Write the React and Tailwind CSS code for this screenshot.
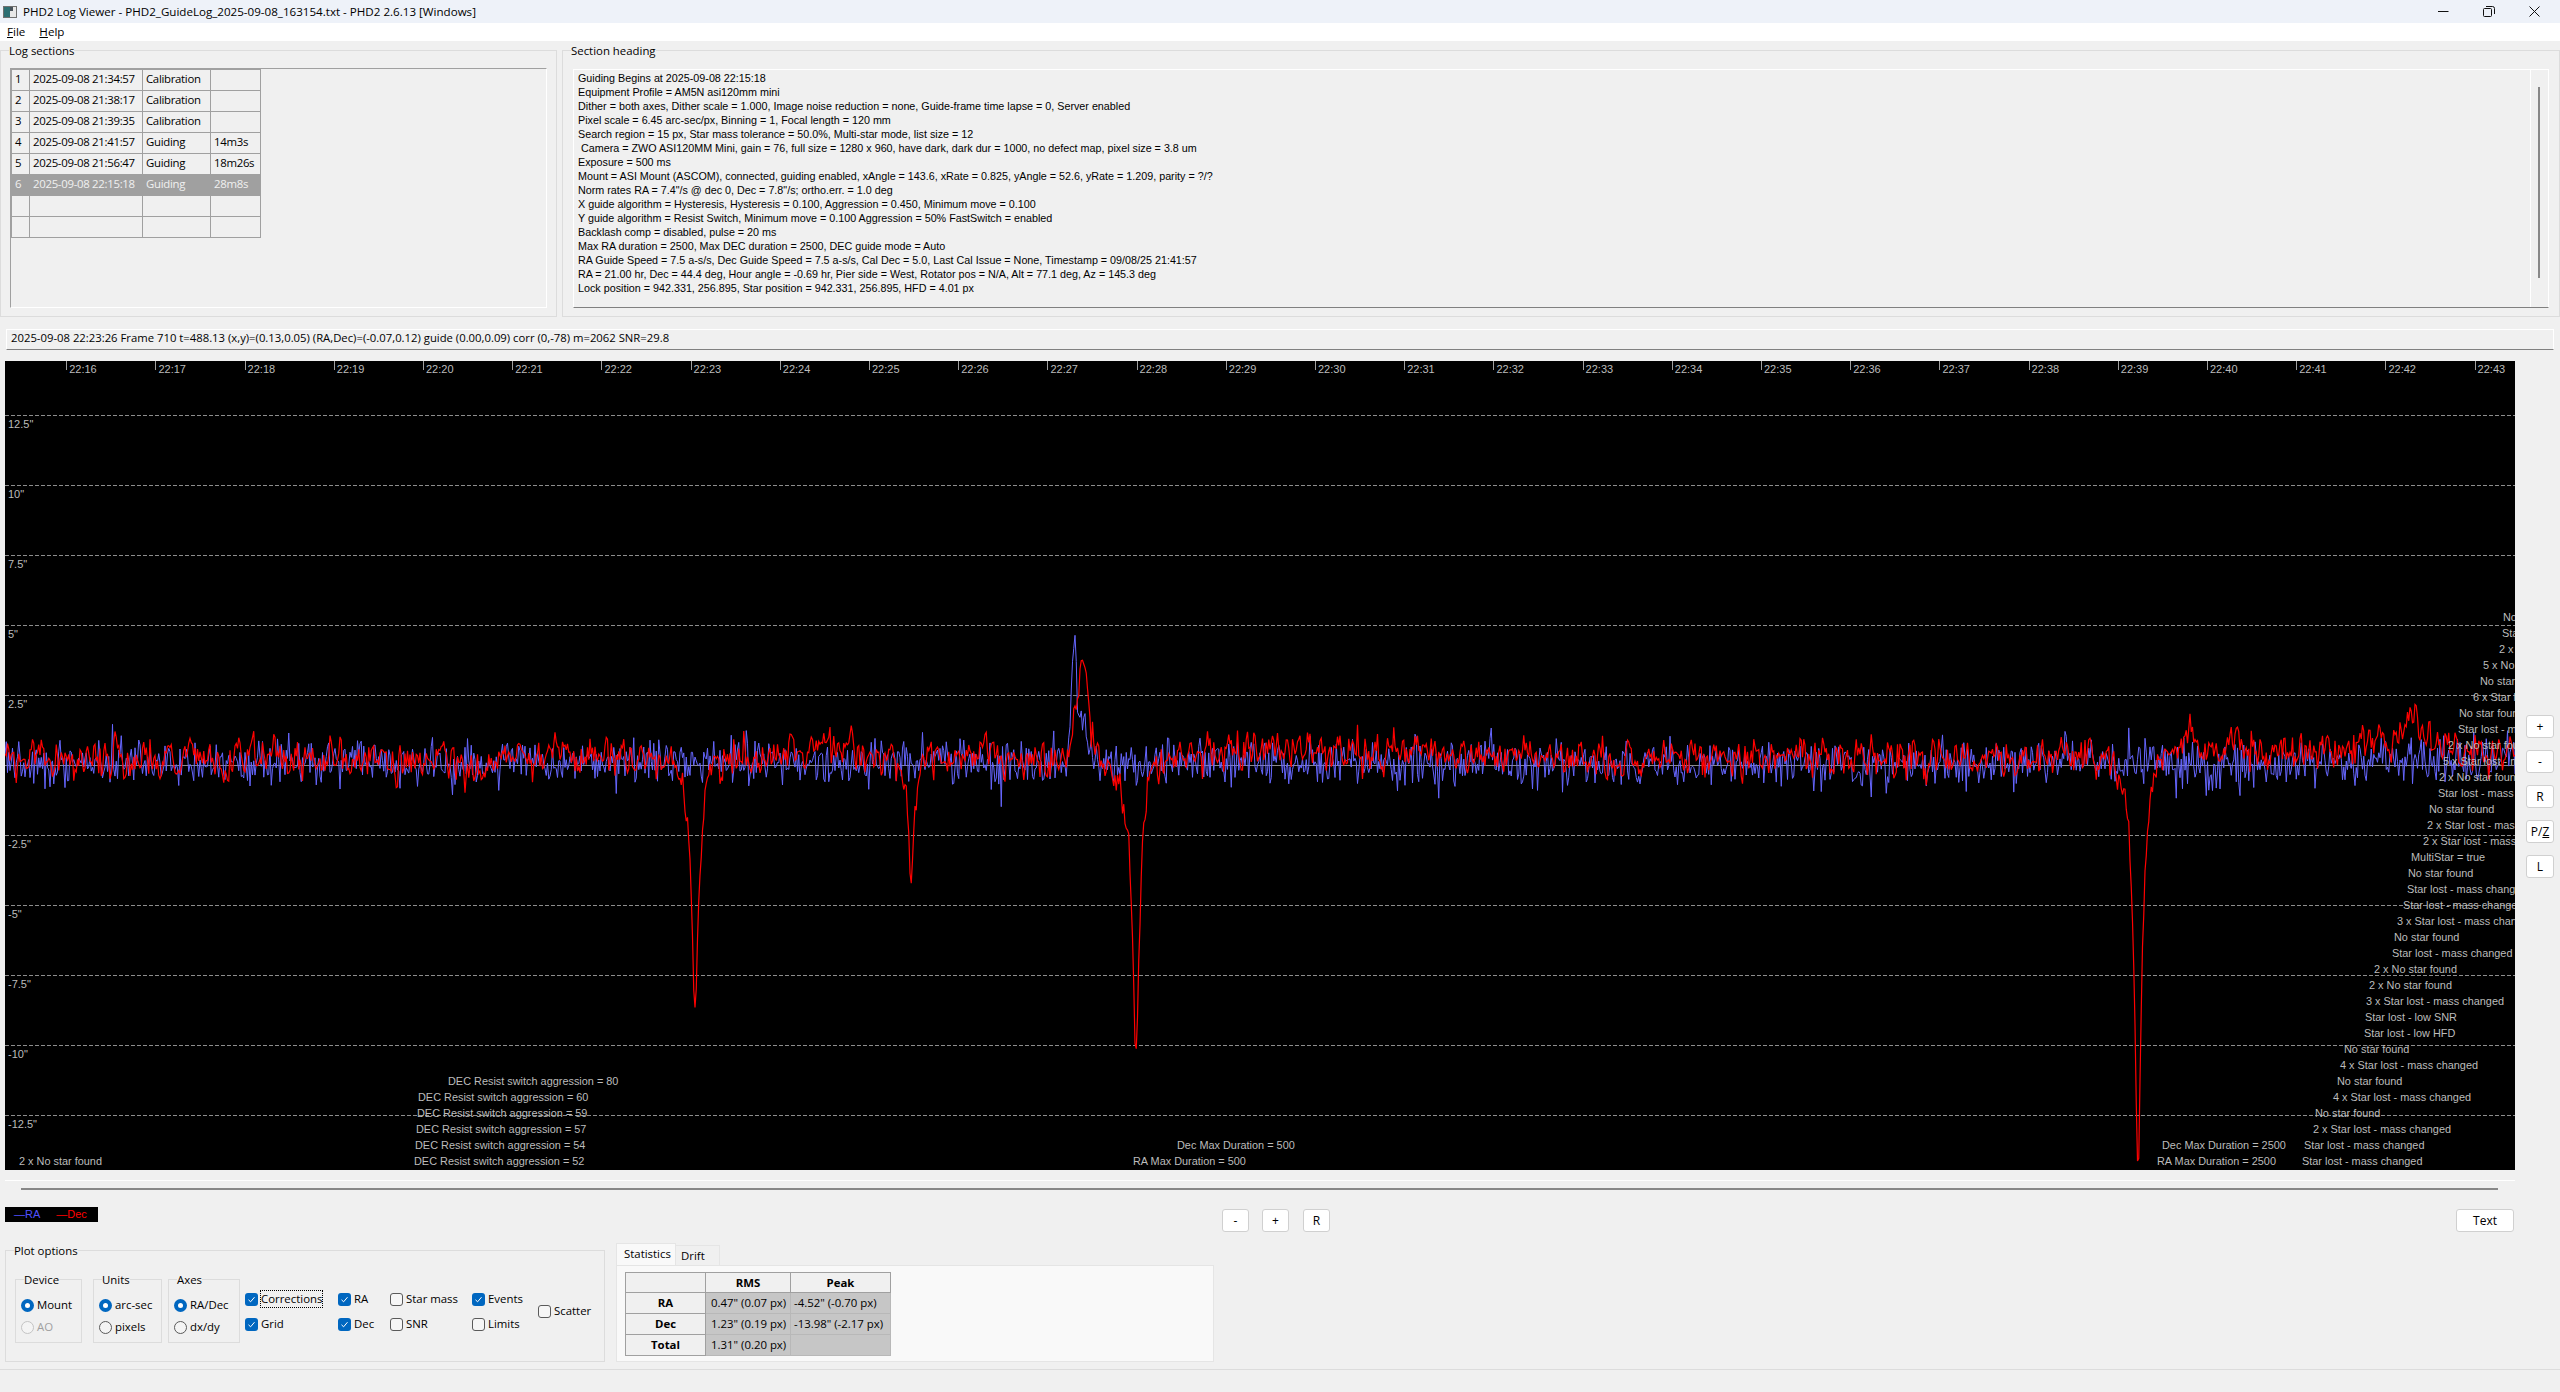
import React from 'react';

// seeded so the trace is the same on every load
const mulberry = (seed) => () => {
    seed |= 0; seed = (seed + 0x6d2b79f5) | 0;
    let t = Math.imul(seed ^ (seed >>> 15), 1 | seed);
    t = (t + Math.imul(t ^ (t >>> 7), 61 | t)) ^ t;
    return ((t ^ (t >>> 14)) >>> 0) / 4294967296;
};

const PLOT_W = 2510;
const ZERO_Y = 404;
const STEP = 1.25;

const buildTraces = () => {
    const rnd = mulberry(7351);
    const gauss = () => (rnd() + rnd() + rnd() + rnd() - 2) * 1.73;
    const spikes = [[690, 252, 5], [906, 126, 3.5], [1131, 288, 5], [2133, 396, 5]];
    const bump = (x, c, w, h) => h * Math.exp(-((x - c) * (x - c)) / (2 * w * w));
    let ra = [], dec = [];
    let ar = 0;
    for (let i = 0; i * STEP <= PLOT_W; i++) {
        const x = i * STEP;
        let amp = 1;
        if (x > 2090 && x < 2250) amp = 1.3;
        if (x > 2380) amp = 1.2;
        let b = gauss() * 11 * amp - 2;
        if (rnd() < 0.04) b += (rnd() - 0.6) * 38;
        b -= bump(x, 1069, 2.5, 118) + bump(x, 1078, 4, 40);
        ra.push(b);

        ar = 0.35 * ar + gauss() * 9;
        let drift = -7;
        drift -= bump(x, 790, 60, 7) + bump(x, 1290, 90, 8) + bump(x, 2300, 130, 11) + bump(x, 2400, 35, 10);
        drift += bump(x, 470, 20, 12) + bump(x, 1115, 8, 20) + bump(x, 2120, 18, 12);
        let cut = 0;
        let dip = 0;
        for (const [c, d, w] of spikes) {
            const f = Math.min(1, Math.exp(-Math.abs(x - c) / w) * 1.2);
            dip += d * f;
            cut = Math.max(cut, f);
        }
        let up = bump(x, 1077, 7, 88) + bump(x, 2185, 5, 26) + bump(x, 2405, 5, 30);
        dec.push(drift + ar * (1 - cut * 0.9) + dip - up);
    }
    const toPts = (arr) => arr.map((v, i) => `${(i * STEP).toFixed(2)},${(ZERO_Y + v).toFixed(1)}`).join(' ');
    return { ra: toPts(ra), dec: toPts(dec) };
};

const traces = buildTraces();

const gridLines = [
    { y: 54, label: '12.5"' },
    { y: 124, label: '10"' },
    { y: 194, label: '7.5"' },
    { y: 264, label: '5"' },
    { y: 334, label: '2.5"' },
    { y: 474, label: '-2.5"' },
    { y: 544, label: '-5"' },
    { y: 614, label: '-7.5"' },
    { y: 684, label: '-10"' },
    { y: 754, label: '-12.5"' },
];

const minutes = Array.from({ length: 28 }, (_, i) => ({ x: 61.7 + 89.2 * i, label: `22:${16 + i}` }));

// x,y are screen coordinates of the label's left edge and middle
const events = [
    [2503, 617, 'No star found'],
    [2502, 633, 'Star lost - mass changed'],
    [2499, 649, '2 x No star found'],
    [2483, 665, '5 x No star found'],
    [2480, 681, 'No star found'],
    [2473, 697, '6 x Star lost - mass changed'],
    [2459, 713, 'No star found'],
    [2458, 729, 'Star lost - mass changed'],
    [2448, 745, '2 x No star found'],
    [2443, 761, '5 x Star lost - mass changed'],
    [2439, 777, '2 x No star found'],
    [2438, 793, 'Star lost - mass changed'],
    [2429, 809, 'No star found'],
    [2427, 825, '2 x Star lost - mass changed'],
    [2423, 841, '2 x Star lost - mass changed'],
    [2411, 857, 'MultiStar = true'],
    [2408, 873, 'No star found'],
    [2407, 889, 'Star lost - mass changed'],
    [2403, 905, 'Star lost - mass changed'],
    [2397, 921, '3 x Star lost - mass changed'],
    [2394, 937, 'No star found'],
    [2392, 953, 'Star lost - mass changed'],
    [2374, 969, '2 x No star found'],
    [2369, 985, '2 x No star found'],
    [2366, 1001, '3 x Star lost - mass changed'],
    [2365, 1017, 'Star lost - low SNR'],
    [2364, 1033, 'Star lost - low HFD'],
    [2344, 1049, 'No star found'],
    [2340, 1065, '4 x Star lost - mass changed'],
    [2337, 1081, 'No star found'],
    [2333, 1097, '4 x Star lost - mass changed'],
    [2315, 1113, 'No star found'],
    [2313, 1129, '2 x Star lost - mass changed'],
    [2304, 1145, 'Star lost - mass changed'],
    [2302, 1161, 'Star lost - mass changed'],
    [2162, 1145, 'Dec Max Duration = 2500'],
    [2157, 1161, 'RA Max Duration = 2500'],
    [1177, 1145, 'Dec Max Duration = 500'],
    [1133, 1161, 'RA Max Duration = 500'],
    [448, 1081, 'DEC Resist switch aggression = 80'],
    [418, 1097, 'DEC Resist switch aggression = 60'],
    [417, 1113, 'DEC Resist switch aggression = 59'],
    [416, 1129, 'DEC Resist switch aggression = 57'],
    [415, 1145, 'DEC Resist switch aggression = 54'],
    [414, 1161, 'DEC Resist switch aggression = 52'],
    [19, 1161, '2 x No star found'],
];

const sections = [
    ['1', '2025-09-08 21:34:57', 'Calibration', ''],
    ['2', '2025-09-08 21:38:17', 'Calibration', ''],
    ['3', '2025-09-08 21:39:35', 'Calibration', ''],
    ['4', '2025-09-08 21:41:57', 'Guiding', '14m3s'],
    ['5', '2025-09-08 21:56:47', 'Guiding', '18m26s'],
    ['6', '2025-09-08 22:15:18', 'Guiding', '28m8s'],
    ['', '', '', ''],
    ['', '', '', ''],
];

const heading = [
    'Guiding Begins at 2025-09-08 22:15:18',
    'Equipment Profile = AM5N asi120mm mini',
    'Dither = both axes, Dither scale = 1.000, Image noise reduction = none, Guide-frame time lapse = 0, Server enabled',
    'Pixel scale = 6.45 arc-sec/px, Binning = 1, Focal length = 120 mm',
    'Search region = 15 px, Star mass tolerance = 50.0%, Multi-star mode, list size = 12',
    ' Camera = ZWO ASI120MM Mini, gain = 76, full size = 1280 x 960, have dark, dark dur = 1000, no defect map, pixel size = 3.8 um',
    'Exposure = 500 ms',
    'Mount = ASI Mount (ASCOM), connected, guiding enabled, xAngle = 143.6, xRate = 0.825, yAngle = 52.6, yRate = 1.209, parity = ?/?',
    'Norm rates RA = 7.4"/s @ dec 0, Dec = 7.8"/s; ortho.err. = 1.0 deg',
    'X guide algorithm = Hysteresis, Hysteresis = 0.100, Aggression = 0.450, Minimum move = 0.100',
    'Y guide algorithm = Resist Switch, Minimum move = 0.100 Aggression = 50% FastSwitch = enabled',
    'Backlash comp = disabled, pulse = 20 ms',
    'Max RA duration = 2500, Max DEC duration = 2500, DEC guide mode = Auto',
    'RA Guide Speed = 7.5 a-s/s, Dec Guide Speed = 7.5 a-s/s, Cal Dec = 5.0, Last Cal Issue = None, Timestamp = 09/08/25 21:41:57',
    'RA = 21.00 hr, Dec = 44.4 deg, Hour angle = -0.69 hr, Pier side = West, Rotator pos = N/A, Alt = 77.1 deg, Az = 145.3 deg',
    'Lock position = 942.331, 256.895, Star position = 942.331, 256.895, HFD = 4.01 px',
];

const stats = [
    ['RA', '0.47" (0.07 px)', '-4.52" (-0.70 px)'],
    ['Dec', '1.23" (0.19 px)', '-13.98" (-2.17 px)'],
    ['Total', '1.31" (0.20 px)', ''],
];

const Group = ({ title, className, titleClass, children }) => (
    <div className={`border border-[#dcdcdc] ${className}`}>
        <div className={`-mt-[7px] h-[14px] w-fit bg-[#f0f0f0] leading-[14px] ${titleClass}`}>{title}</div>
        {children}
    </div>
);

const Radio = ({ label, checked, disabled }) => (
    <div className={`flex h-[16px] items-center gap-[3px] leading-[16px] ${disabled ? 'text-[#a0a0a0]' : ''}`}>
        {checked ? (
            <span className="flex h-[13px] w-[13px] items-center justify-center rounded-full bg-[#0067c0]">
                <span className="h-[5px] w-[5px] rounded-full bg-white"></span>
            </span>
        ) : (
            <span className={`h-[13px] w-[13px] rounded-full border ${disabled ? 'border-[#c4c4c4]' : 'border-[#5a5a5a]'} bg-[#f4f4f4]`}></span>
        )}
        <span>{label}</span>
    </div>
);

const Check = ({ label, checked, focus }) => (
    <div className="flex h-[16px] items-center gap-[3px] leading-[16px]">
        {checked ? (
            <span className="flex h-[13px] w-[13px] items-center justify-center rounded-[3px] bg-[#0067c0]">
                <svg width="9" height="9" viewBox="0 0 9 9" fill="none" stroke="white" strokeWidth="1">
                    <path d="M1.5 4.8 L3.6 6.8 L7.5 2.2" />
                </svg>
            </span>
        ) : (
            <span className="h-[13px] w-[13px] rounded-[3px] border border-[#5a5a5a] bg-[#f6f6f6]"></span>
        )}
        <span className={focus ? 'outline-1 outline-dotted outline-black' : ''}>{label}</span>
    </div>
);

const SmallButton = ({ children, className }) => (
    <button className={`flex h-[23px] items-center justify-center rounded-[3px] border border-[#d0d0d0] bg-white text-[12px] leading-none text-black ${className}`}>
        {children}
    </button>
);

const App = () => {
    return (
        <div className="flex h-[1392px] w-[2560px] flex-col overflow-hidden bg-[#f0f0f0] font-['Open_Sans',sans-serif] text-[11.4px] text-black">

            {/* Title bar */}
            <div className="flex h-[23px] shrink-0 items-center bg-[#eef2f9] pl-[3px]">
                <svg width="14" height="12" viewBox="0 0 14 12" className="shrink-0">
                    <rect x="0.5" y="0.5" width="13" height="11" fill="#e8e8e8" stroke="#707070" />
                    <rect x="1" y="1" width="6" height="10" fill="#2d6f73" />
                    <rect x="7" y="1" width="3" height="4" fill="#49535c" />
                </svg>
                <span className="ml-[6px] text-[11.6px] whitespace-pre">PHD2 Log Viewer - PHD2_GuideLog_2025-09-08_163154.txt - PHD2 2.6.13 [Windows]</span>
                <div className="ml-auto flex items-center pr-[20px]">
                    <svg width="11" height="11" viewBox="0 0 11 11" fill="none" stroke="#111" strokeWidth="1"><path d="M0 5.5H10.5" /></svg>
                    <svg width="12" height="11" viewBox="0 0 12 11" fill="none" stroke="#111" strokeWidth="1" className="ml-[34px]">
                        <rect x="0.5" y="2.5" width="8" height="8" rx="1" />
                        <path d="M3 0.5H9.5a2 2 0 0 1 2 2V8" />
                    </svg>
                    <svg width="11" height="11" viewBox="0 0 11 11" fill="none" stroke="#111" strokeWidth="1" className="ml-[34px]"><path d="M0.5 0.5L10.5 10.5M10.5 0.5L0.5 10.5" /></svg>
                </div>
            </div>

            {/* Menu */}
            <div className="flex h-[18px] shrink-0 items-center gap-[14px] bg-white pl-[7px] text-[11.6px]">
                <span><u>F</u>ile</span>
                <span><u>H</u>elp</span>
            </div>

            {/* Log sections + heading */}
            <div className="mt-[9px] flex h-[267px] shrink-0">
                <Group title="Log sections" className="w-[557px]" titleClass="ml-[8px]">
                    <div className="mt-[10px] ml-[9px] h-[240px] w-[537px] border-t border-l border-t-[#a0a0a0] border-l-[#a0a0a0] border-r border-b border-r-white border-b-white">
                        <table className="w-[249px] table-fixed border-collapse tracking-[-0.3px]">
                            <colgroup>
                                <col className="w-[18px]" />
                                <col className="w-[113px]" />
                                <col className="w-[68px]" />
                                <col className="w-[50px]" />
                            </colgroup>
                            <tbody>
                                {sections.map((row, i) => (
                                    <tr key={i} className={`h-[21px] ${i === 5 ? 'bg-[#a0a0a0] text-[#f0f0f0]' : ''}`}>
                                        {row.map((cell, j) => (
                                            <td key={j} className="border border-[#a0a0a0] px-[3px] pt-0 pb-[2px] leading-[14px] whitespace-nowrap">{cell}</td>
                                        ))}
                                    </tr>
                                ))}
                            </tbody>
                        </table>
                    </div>
                </Group>

                <Group title="Section heading" className="ml-[5px] flex-1" titleClass="ml-[8px]">
                    <div className="mt-[11px] ml-[10px] flex h-[239px] w-[1976px] border-t border-l border-t-white border-l-white border-r border-r-white border-b border-b-[#808080]">
                        <div className="flex-1 pt-[1px] pl-[4px] font-['Liberation_Sans',sans-serif] text-[10.75px] leading-[14px] whitespace-pre">
                            {heading.map((line, i) => <div key={i}>{line}</div>)}
                        </div>
                        <div className="w-[18px] border-l border-l-white pt-[17px] pl-[7px]">
                            <div className="h-[191px] w-[2px] bg-[#888888]"></div>
                        </div>
                    </div>
                </Group>
            </div>

            {/* Status line */}
            <div className="mt-[12px] ml-[6px] flex h-[21px] w-[2548px] shrink-0 items-center border-t border-l border-t-white border-l-white border-r border-r-white border-b border-b-[#808080] pb-[2px] pl-[4px] text-[11.3px] whitespace-pre">
                2025-09-08 22:23:26 Frame 710 t=488.13 (x,y)=(0.13,0.05) (RA,Dec)=(-0.07,0.12) guide (0.00,0.09) corr (0,-78) m=2062 SNR=29.8
            </div>

            {/* Plot */}
            <div className="mt-[11px] ml-[5px] flex shrink-0">
                <div className="relative h-[809px] w-[2510px] overflow-hidden bg-black font-['Liberation_Sans',sans-serif] text-[11px] text-[#bcbcbc]">
                    <svg width={PLOT_W} height="809" className="absolute top-0 left-0">
                        {gridLines.map((g) => (
                            <line key={g.y} x1="0" x2={PLOT_W} y1={g.y + 0.5} y2={g.y + 0.5} stroke="#8c8c8c" strokeDasharray="4 2" shapeRendering="crispEdges" />
                        ))}
                        <line x1="0" x2={PLOT_W} y1={ZERO_Y + 0.5} y2={ZERO_Y + 0.5} stroke="#8a8a8a" shapeRendering="crispEdges" />
                        {minutes.map((m) => (
                            <line key={m.label} x1={m.x} x2={m.x} y1="0" y2="9" stroke="#a0a0a0" shapeRendering="crispEdges" />
                        ))}
                        <polyline points={traces.ra} fill="none" stroke="#6666ff" strokeWidth="1" />
                        <polyline points={traces.dec} fill="none" stroke="#ff0000" strokeWidth="1.2" />
                    </svg>
                    {minutes.map((m) => (
                        <span key={m.label} className="absolute top-0 leading-[16px]" style={{ left: m.x + 2.5 }}>{m.label}</span>
                    ))}
                    {gridLines.map((g) => (
                        <span key={g.y} className="absolute left-[3px] leading-[16px]" style={{ top: g.y + 1 }}>{g.label}</span>
                    ))}
                    {events.map(([x, y, text], i) => (
                        <span key={i} className="absolute text-[10.9px] leading-[16px] whitespace-pre" style={{ left: x - 5, top: y - 361 - 8 }}>{text}</span>
                    ))}
                </div>

                <div className="ml-[11px] flex flex-col gap-[12px] pt-[354px]">
                    <SmallButton className="w-[28px]">+</SmallButton>
                    <SmallButton className="w-[28px]">-</SmallButton>
                    <SmallButton className="w-[28px]">R</SmallButton>
                    <SmallButton className="w-[28px]">P/<u>Z</u></SmallButton>
                    <SmallButton className="w-[28px]">L</SmallButton>
                </div>
            </div>

            {/* Splitters */}
            <div className="mt-[10px] ml-[5px] h-px w-[2510px] shrink-0 bg-white"></div>
            <div className="mt-[7px] ml-[21px] h-[2px] w-[2477px] shrink-0 bg-[#888888]"></div>

            {/* Legend and zoom buttons */}
            <div className="mt-[17px] flex h-[43px] shrink-0 items-start pl-[5px]">
                <div className="flex h-[15px] w-[93px] items-center gap-[16px] bg-black pl-[9px] font-['Liberation_Sans',sans-serif] text-[11px] leading-none">
                    <span className="text-[#5050ff]">—RA</span>
                    <span className="text-[#ff0000]">—Dec</span>
                </div>
                <div className="mt-[2px] ml-[1124px] flex gap-[13px]">
                    <SmallButton className="w-[27px]">-</SmallButton>
                    <SmallButton className="w-[27px]">+</SmallButton>
                    <SmallButton className="ml-[1px] w-[27px]">R</SmallButton>
                </div>
                <SmallButton className="mt-[2px] ml-[1126px] w-[58px]">Text</SmallButton>
            </div>

            {/* Options and statistics */}
            <div className="flex h-[112px] shrink-0 items-start pl-[5px]">
                <Group title="Plot options" className="h-[112px] w-[600px]" titleClass="ml-[8px]">
                    <div className="mt-[21px] ml-[9px] flex">
                        <Group title="Device" className="h-[64px] w-[67px]" titleClass="ml-[8px]">
                            <div className="mt-[10px] flex flex-col gap-[6px] pl-[5px]">
                                <Radio label="Mount" checked />
                                <Radio label="AO" disabled />
                            </div>
                        </Group>
                        <Group title="Units" className="ml-[11px] h-[64px] w-[69px]" titleClass="ml-[8px]">
                            <div className="mt-[10px] flex flex-col gap-[6px] pl-[5px]">
                                <Radio label="arc-sec" checked />
                                <Radio label="pixels" />
                            </div>
                        </Group>
                        <Group title="Axes" className="ml-[6px] h-[64px] w-[72px]" titleClass="ml-[8px]">
                            <div className="mt-[10px] flex flex-col gap-[6px] pl-[5px]">
                                <Radio label="RA/Dec" checked />
                                <Radio label="dx/dy" />
                            </div>
                        </Group>
                        <div className="mt-[12px] ml-[5px] flex w-[93px] flex-col gap-[9px]">
                            <Check label="Corrections" checked focus />
                            <Check label="Grid" checked />
                        </div>
                        <div className="mt-[12px] flex w-[52px] flex-col gap-[9px]">
                            <Check label="RA" checked />
                            <Check label="Dec" checked />
                        </div>
                        <div className="mt-[12px] flex w-[82px] flex-col gap-[9px]">
                            <Check label="Star mass" />
                            <Check label="SNR" />
                        </div>
                        <div className="mt-[12px] flex w-[66px] flex-col gap-[9px]">
                            <Check label="Events" checked />
                            <Check label="Limits" />
                        </div>
                        <div className="mt-[24px]">
                            <Check label="Scatter" />
                        </div>
                    </div>
                </Group>

                <div className="-mt-[7px] ml-[11px] flex w-[598px] flex-col">
                    <div className="flex h-[22px] items-end">
                        <div className="h-[22px] w-[60px] border-t border-r border-l border-[#e5e5e5] bg-[#f9f9f9] pl-[7px] leading-[20px]">Statistics</div>
                        <div className="h-[20px] w-[44px] border-t border-r border-[#e5e5e5] bg-[#f0f0f0] pl-[5px] leading-[20px]">Drift</div>
                    </div>
                    <div className="h-[97px] border border-[#e5e5e5] bg-[#f9f9f9] pt-[6px] pl-[8px]">
                        <table className="w-[265px] table-fixed border-collapse">
                            <colgroup>
                                <col className="w-[80px]" />
                                <col className="w-[85px]" />
                                <col className="w-[100px]" />
                            </colgroup>
                            <tbody>
                                <tr className="h-[20px] font-bold">
                                    <td className="border border-[#a0a0a0] bg-[#f0f0f0]"></td>
                                    <td className="border border-[#a0a0a0] bg-[#f0f0f0] text-center">RMS</td>
                                    <td className="border border-[#a0a0a0] bg-[#f0f0f0] text-center">Peak</td>
                                </tr>
                                {stats.map((row) => (
                                    <tr key={row[0]} className="h-[21px]">
                                        <td className="border border-[#a0a0a0] bg-[#f0f0f0] text-center font-bold">{row[0]}</td>
                                        <td className="border border-[#b8b8b8] bg-[#c6c6c6] pl-[5px] whitespace-nowrap">{row[1]}</td>
                                        <td className="border border-[#b8b8b8] bg-[#c6c6c6] pl-[3px] whitespace-nowrap">{row[2]}</td>
                                    </tr>
                                ))}
                            </tbody>
                        </table>
                    </div>
                </div>
            </div>

            {/* Bottom edge */}
            <div className="mt-[7px] h-px w-full shrink-0 bg-[#dcdcdc]"></div>
        </div>
    );
};

export default App;
